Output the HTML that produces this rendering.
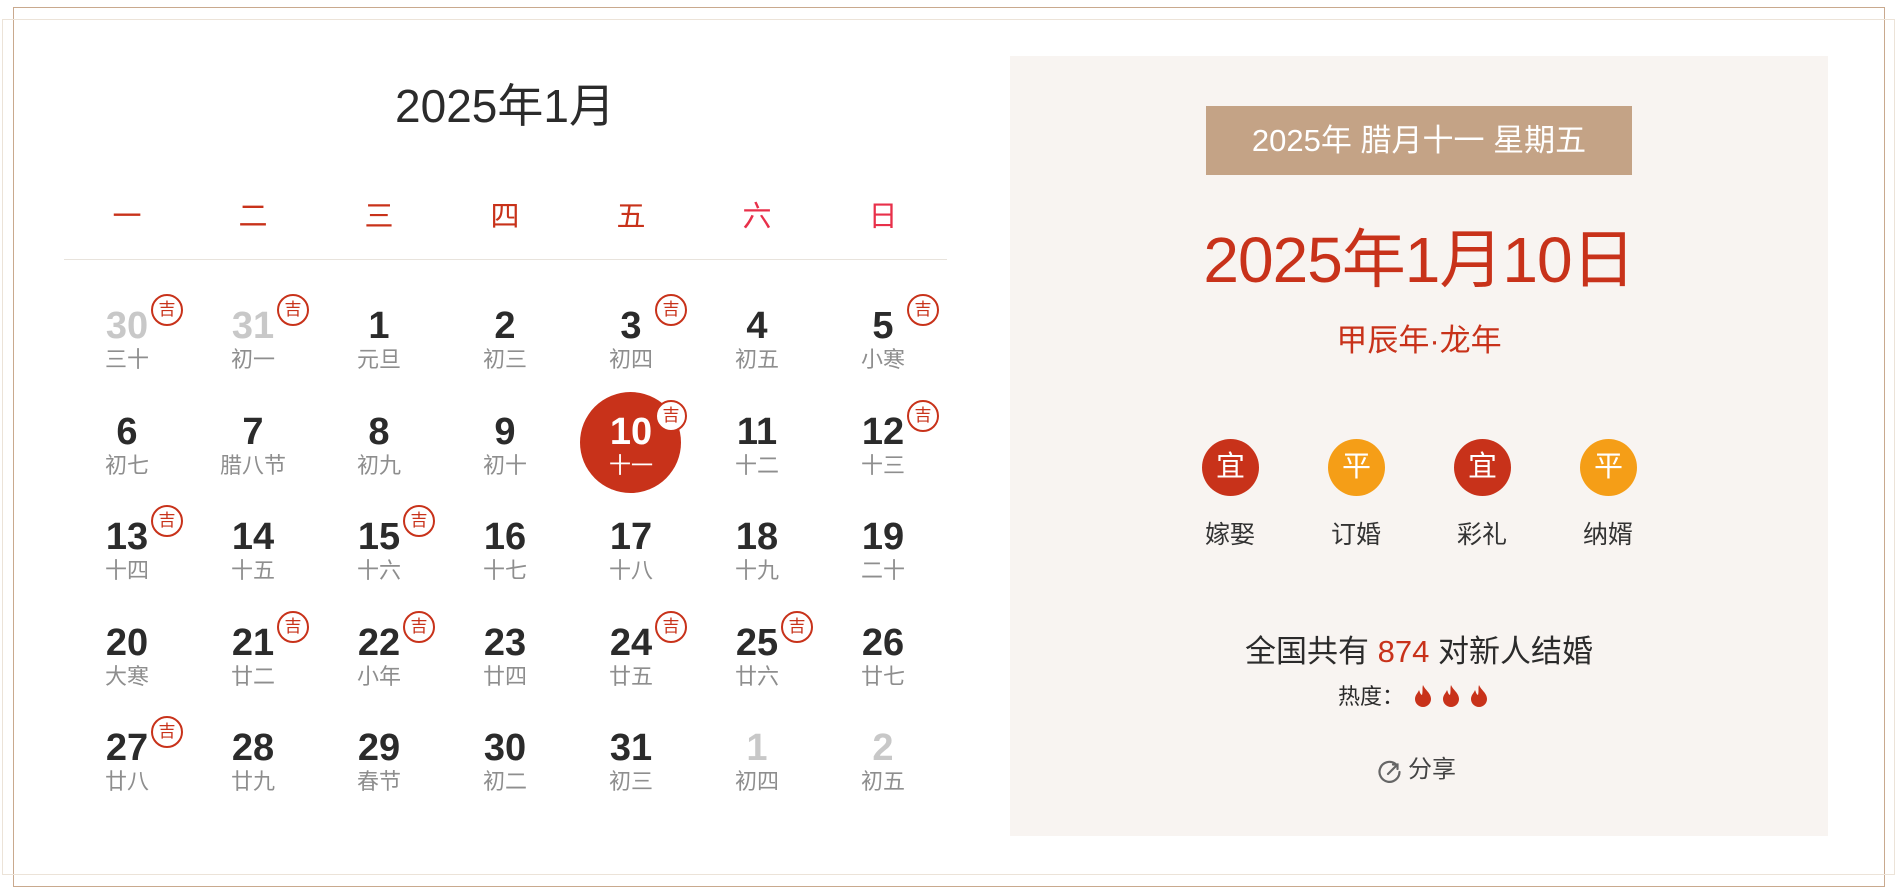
<!DOCTYPE html>
<html><head><meta charset="utf-8"><style>
*{margin:0;padding:0;box-sizing:border-box}
body{width:1898px;height:892px;background:#fff;position:relative;overflow:hidden;font-family:"Liberation Sans","Noto Sans CJK SC",sans-serif}
.a{position:absolute}
.c{position:absolute;width:126px;text-align:center}
.n{font-weight:bold;font-size:38px;color:#2b2b2b;line-height:40px}
.n.g{color:#c8c8c8}
.l{font-size:22px;color:#8e8e8e;line-height:26px}
.ji{position:absolute;width:32px;height:32px;border:2px solid #c8321a;border-radius:50%;color:#c8321a;font-size:17px;line-height:28px;text-align:center;background:#fff}
.wk{position:absolute;width:126px;text-align:center;font-size:29px;line-height:34px;color:#c8321a}
.bub{position:absolute;width:57px;height:57px;border-radius:50%;color:#fff;font-size:29px;line-height:57px;text-align:center}
.lab{position:absolute;width:126px;text-align:center;font-size:25px;color:#333}
</style></head><body>
<div class="a" style="left:13px;top:7px;width:1872px;height:880px;border:1.5px solid #c9a98e"></div>
<div class="a" style="left:2px;top:19px;width:1893px;height:856px;border:1.5px solid #ece3d8"></div>
<div class="a" style="left:14px;top:20px;width:1870px;height:854px;background:#fff"></div>

<div class="a" style="left:255px;top:78px;width:500px;text-align:center;font-size:46px;color:#2b2b2b;line-height:56px">2025年1月</div>

<div class="wk" style="left:64px;top:200px">一</div>
<div class="wk" style="left:190px;top:200px">二</div>
<div class="wk" style="left:316px;top:200px">三</div>
<div class="wk" style="left:442px;top:200px">四</div>
<div class="wk" style="left:568px;top:200px">五</div>
<div class="wk" style="left:694px;top:200px;color:#e8304a">六</div>
<div class="wk" style="left:820px;top:200px;color:#e8304a">日</div>
<div class="a" style="left:64px;top:259px;width:883px;height:1px;background:#e8e3dc"></div>

<div class="a" style="left:580px;top:392px;width:101px;height:101px;border-radius:50%;background:#c8321a"></div>

<div id="grid"></div>

<div class="a" style="left:1010px;top:56px;width:818px;height:780px;background:#f8f4f1"></div>
<div class="a" style="left:1206px;top:106px;width:426px;height:69px;background:#c4a386;color:#fff;font-size:31px;line-height:69px;text-align:center">2025年&nbsp;腊月十一&nbsp;星期五</div>
<div class="a" style="left:1010px;top:220px;width:818px;text-align:center;font-size:64px;line-height:80px;color:#c8321a;letter-spacing:-1px">2025年1月10日</div>
<div class="a" style="left:1010px;top:322px;width:818px;text-align:center;font-size:31px;line-height:38px;color:#c8321a">甲辰年·龙年</div>

<div class="bub" style="left:1202px;top:439px;background:#c8321a">宜</div>
<div class="bub" style="left:1328px;top:439px;background:#f59e17">平</div>
<div class="bub" style="left:1454px;top:439px;background:#c8321a">宜</div>
<div class="bub" style="left:1580px;top:439px;background:#f59e17">平</div>
<div class="lab" style="left:1167px;top:515px">嫁娶</div>
<div class="lab" style="left:1293px;top:515px">订婚</div>
<div class="lab" style="left:1419px;top:515px">彩礼</div>
<div class="lab" style="left:1545px;top:515px">纳婿</div>

<div class="a" style="left:1010px;top:632px;width:818px;text-align:center;font-size:31px;line-height:40px;color:#2b2b2b">全国共有 <span style="color:#c8321a">874</span> 对新人结婚</div>
<div class="a" style="left:1338px;top:683px;font-size:22px;line-height:28px;color:#2b2b2b">热度：</div>
<svg class="a" style="left:1413px;top:684px" width="80" height="24" viewBox="0 0 80 24">
<g fill="#c8321a">
<path d="M10 1C12 6 18 9 18 15a8 8 0 0 1-16 0c0-4 3-6 4-9 1 2 1 4 3 5 1-4 0-7 1-10z"/>
<path transform="translate(28 0)" d="M10 1C12 6 18 9 18 15a8 8 0 0 1-16 0c0-4 3-6 4-9 1 2 1 4 3 5 1-4 0-7 1-10z"/>
<path transform="translate(56 0)" d="M10 1C12 6 18 9 18 15a8 8 0 0 1-16 0c0-4 3-6 4-9 1 2 1 4 3 5 1-4 0-7 1-10z"/>
</g></svg>
<svg class="a" style="left:1377px;top:759px" width="25" height="25" viewBox="0 0 25 25" fill="none" stroke="#666" stroke-width="2.2" stroke-linecap="round">
<path d="M18 4.5A10 10 0 1 0 22.5 13"/><path d="M20 6L11 15"/><path d="M16 5.5h4.5V10"/></svg>
<div class="a" style="left:1408px;top:754px;font-size:24px;line-height:32px;color:#444">分享</div>

<script>
var rows=[
[["30","三十",1,1],["31","初一",1,1],["1","元旦"],["2","初三"],["3","初四",1],["4","初五"],["5","小寒",1]],
[["6","初七"],["7","腊八节"],["8","初九"],["9","初十"],["10","十一",1,0,1],["11","十二"],["12","十三",1]],
[["13","十四",1],["14","十五"],["15","十六",1],["16","十七"],["17","十八"],["18","十九"],["19","二十"]],
[["20","大寒"],["21","廿二",1],["22","小年",1],["23","廿四"],["24","廿五",1],["25","廿六",1],["26","廿七"]],
[["27","廿八",1],["28","廿九"],["29","春节"],["30","初二"],["31","初三"],["1","初四",0,1],["2","初五",0,1]]];
var h="";
rows.forEach(function(r,ri){var cy=326+ri*105.5;r.forEach(function(d,ci){var x=64+ci*126;var sel=d[4];
h+='<div class="c n'+(d[3]?' g':'')+'" style="left:'+x+'px;top:'+(cy-20)+'px;'+(sel?'color:#fff':'')+'">'+d[0]+'</div>';
h+='<div class="c l" style="left:'+x+'px;top:'+(cy+21)+'px;'+(sel?'color:#fff':'')+'">'+d[1]+'</div>';
if(d[2])h+='<div class="ji" style="left:'+(x+63+40-16)+'px;top:'+(cy-16-16)+'px">吉</div>';});});
document.getElementById("grid").innerHTML=h;
</script>
</body></html>
